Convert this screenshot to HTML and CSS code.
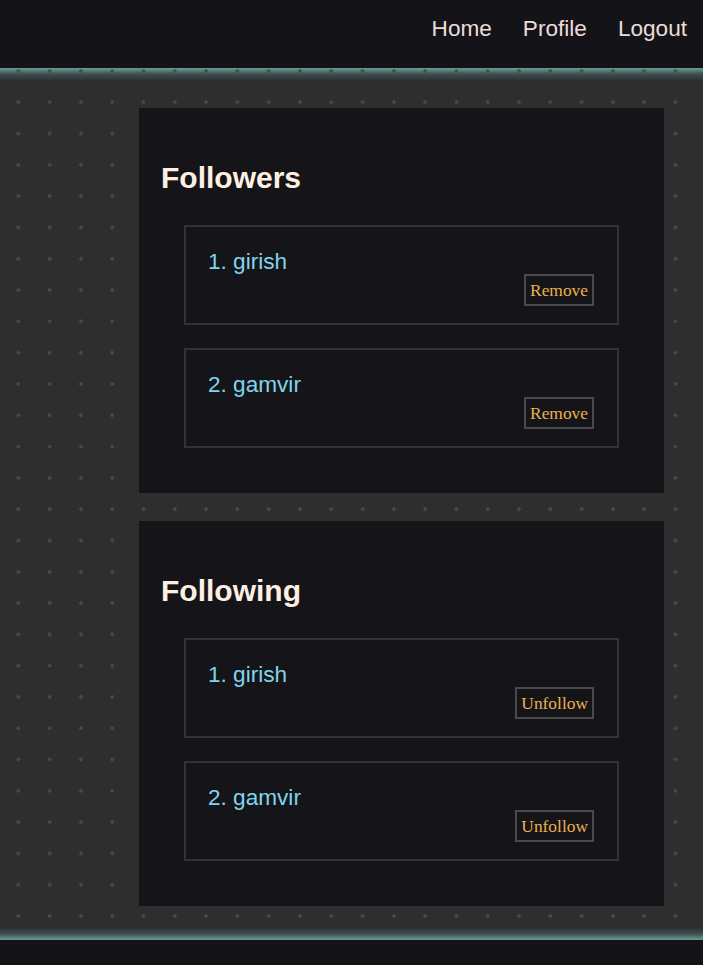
FILE: index.html
```html
<!DOCTYPE html>
<html lang="en">
<head>
<meta charset="utf-8">
<title>Connections</title>
<link rel="stylesheet" href="styles.css">
</head>
<body>
<header class="topbar">
  <nav class="nav">
    <a class="nav-link" href="#">Home</a>
    <a class="nav-link" href="#">Profile</a>
    <a class="nav-link" href="#">Logout</a>
  </nav>
</header>
<main class="main">
  <section class="card">
    <h2 class="card-title">Followers</h2>
    <ul class="list">
      <li class="item">
        <span class="item-name">1. girish</span>
        <div class="item-actions"><button class="btn">Remove</button></div>
      </li>
      <li class="item">
        <span class="item-name">2. gamvir</span>
        <div class="item-actions"><button class="btn">Remove</button></div>
      </li>
    </ul>
  </section>
  <section class="card">
    <h2 class="card-title">Following</h2>
    <ul class="list">
      <li class="item">
        <span class="item-name">1. girish</span>
        <div class="item-actions"><button class="btn">Unfollow</button></div>
      </li>
      <li class="item">
        <span class="item-name">2. gamvir</span>
        <div class="item-actions"><button class="btn">Unfollow</button></div>
      </li>
    </ul>
  </section>
</main>
<footer class="footer"></footer>
</body>
</html>
```
FILE: styles.css
```css
* { box-sizing: border-box; }
html, body { margin: 0; padding: 0; }
body {
  background: #141418;
  font-family: "Liberation Sans", Arial, sans-serif;
}
.topbar {
  height: 68px;
  background: #141418;
  display: flex;
  justify-content: flex-end;
  align-items: center;
  padding: 0 16px 10px 0;
}
.nav {
  display: flex;
  gap: 31px;
}
.nav-link {
  color: #ecdcd8;
  text-decoration: none;
  font-size: 22.6px;
  line-height: 26px;
}
.main {
  display: flex;
  flex-direction: column;
  gap: 28px;
  padding: 40px 39px 34px 139px;
  background-color: #2e2e2e;
  background-image:
    radial-gradient(circle, #4b4c47 1.4px, transparent 2.1px),
    linear-gradient(to bottom, #6b9797 0px, #5f8686 2px, rgba(80,110,110,0.5) 6px, rgba(46,46,46,0) 13px),
    linear-gradient(to top, #6b9797 0px, #5f8686 2px, rgba(80,110,110,0.5) 6px, rgba(46,46,46,0) 13px);
  background-size: 31.3px 31.3px, 100% 100%, 100% 100%;
  background-position: 2.65px -12.65px, 0 0, 0 0;
  background-repeat: repeat, no-repeat, no-repeat;
}
.card {
  background: #151519;
  padding: 52px 45px 45px 22px;
}
.card-title {
  margin: 0 0 29px 0;
  font-size: 30px;
  line-height: 36px;
  font-weight: bold;
  color: #fdf0e2;
}
.list {
  list-style: none;
  margin: 0;
  padding: 0 0 0 23px;
  display: flex;
  flex-direction: column;
  gap: 23px;
}
.item {
  border: 2px solid #333336;
  padding: 22px 23px 17px 22px;
  display: flex;
  flex-direction: column;
  height: 100px;
}
.item-name {
  color: #80d5ec;
  font-size: 22.6px;
  line-height: 25px;
}
.item-actions {
  display: flex;
  justify-content: flex-end;
}
.btn {
  background: transparent;
  border: 2px solid #4a4a4c;
  color: #ebb04c;
  font-family: "Liberation Serif", "Times New Roman", serif;
  font-size: 17.4px;
  line-height: 20px;
  padding: 4px 4px;
  height: 32px;
  cursor: pointer;
}
.footer {
  height: 25px;
  background: #141418;
}
```
